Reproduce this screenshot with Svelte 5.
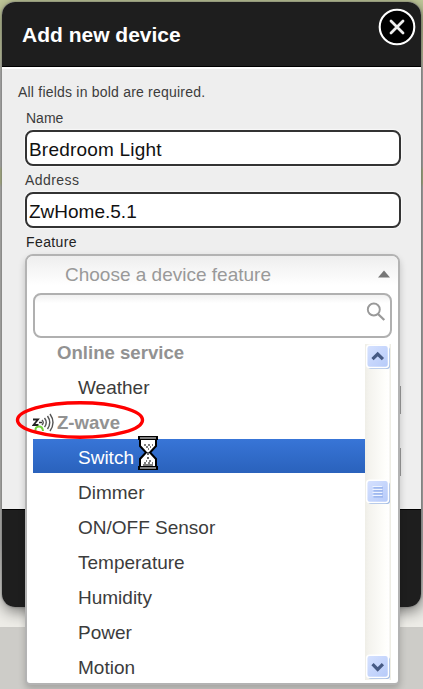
<script>
  const rows = [
    { text: 'Online service', group: true },
    { text: 'Weather' },
    { text: 'Z-wave', group: true, icon: true },
    { text: 'Switch', active: true },
    { text: 'Dimmer' },
    { text: 'ON/OFF Sensor' },
    { text: 'Temperature' },
    { text: 'Humidity' },
    { text: 'Power' },
    { text: 'Motion' }
  ];
</script>

<div class="page">
  <section class="dialog">
    <header>
      <h1>Add new device</h1>
      <svg class="close" width="38" height="38" viewBox="0 0 38 38">
        <circle cx="19" cy="19" r="17.3" fill="#000" stroke="#fff" stroke-width="2.1" />
        <path d="M13 13 L25 25 M25 13 L13 25" stroke="#eee" stroke-width="2.8" stroke-linecap="round" />
      </svg>
    </header>
    <div class="body">
      <p>All fields in bold are required.</p>
      <div class="label">Name</div>
      <div class="input first">Bredroom Light</div>
      <div class="label address">Address</div>
      <div class="input">ZwHome.5.1</div>
      <div class="label feature">Feature</div>
      <i class="edge one"></i>
      <i class="edge two"></i>
    </div>
    <footer></footer>
  </section>

  <div class="dropdown">
    <div class="choice">
      <span>Choose a device feature</span>
      <svg width="12" height="8" viewBox="0 0 12 8"><path d="M0 7.5 L6 0.5 L12 7.5 Z" fill="#777" /></svg>
    </div>
    <div class="search">
      <svg width="20" height="20" viewBox="0 0 20 20" fill="none" stroke="#999">
        <circle cx="7.8" cy="7.5" r="6" stroke-width="1.9" />
        <path d="M12 12 L18.3 18" stroke-width="2.3" />
      </svg>
    </div>
    <div class="results">
      <div class="list">
        {#each rows as row}
          <div class="row" class:group={row.group} class:active={row.active}>
            {#if row.icon}
              <svg class="wave" width="24" height="20" viewBox="0 0 24 20" fill="none">
                <path d="M1 6.5 H6 L1.5 12 H6.5" stroke="#222" stroke-width="1.8" />
                <path d="M7 9.5 H10" stroke="#333" stroke-width="1.5" />
                <path d="M10 7 Q12.5 9.5 10 12 M12.5 5 Q16 9.5 12.5 14 M15.5 3 Q20 9.5 15.5 16 M18 1 Q24 9.5 18 18" stroke="#555" stroke-width="1.4" />
                <path d="M3.5 18 Q3 13.5 7 13.5 Q10.5 13.5 11 18" stroke="#72d33c" stroke-width="2" />
              </svg>
            {/if}
            {row.text}
          </div>
        {/each}
      </div>
      <div class="scrollbar">
        <svg class="button" width="26" height="26" viewBox="0 0 26 26">
          <rect x="3" y="3" width="22" height="22" rx="3" fill="#a9c1e6" />
          <rect x="1.7" y="1.2" width="21.8" height="22.2" rx="3" fill="url(#blue)" stroke="#fff" stroke-width="1.5" />
          <path d="M7.5 15.2 L12.7 10 L17.9 15.2" fill="none" stroke="#465a84" stroke-width="3.2" />
          <defs>
            <linearGradient id="blue" x1="0" y1="0" x2="1" y2="1">
              <stop offset="0" stop-color="#d7e2ff" />
              <stop offset="1" stop-color="#b5caf9" />
            </linearGradient>
          </defs>
        </svg>
        <svg class="button" width="26" height="26" viewBox="0 0 26 26">
          <rect x="3" y="3" width="22" height="22" rx="3" fill="#a0bae2" />
          <rect x="1.7" y="1.2" width="21.8" height="22.2" rx="3" fill="url(#blue)" stroke="#fff" stroke-width="1.5" />
          <path d="M7.5 7.5 H17 M7.5 10.5 H17 M7.5 13.5 H17 M7.5 16.5 H17" stroke="#eff4ff" stroke-width="1.2" />
          <path d="M8.5 8.8 H18 M8.5 11.8 H18 M8.5 14.8 H18 M8.5 17.8 H18" stroke="#91aeea" stroke-width="1.2" />
        </svg>
        <svg class="button" width="26" height="26" viewBox="0 0 26 26">
          <rect x="3" y="3" width="22" height="22" rx="3" fill="#a0bae2" />
          <rect x="1.7" y="1.2" width="21.8" height="22.2" rx="3" fill="url(#blue)" stroke="#fff" stroke-width="1.5" />
          <path d="M7.5 10.2 L12.7 15.4 L17.9 10.2" fill="none" stroke="#465a84" stroke-width="3.2" />
        </svg>
      </div>
    </div>
  </div>

  <svg class="ring" width="132" height="42" viewBox="0 0 132 42">
    <ellipse cx="66" cy="21" rx="62.5" ry="17.3" fill="none" stroke="#f00" stroke-width="3.4" />
  </svg>
  <svg class="hourglass" width="22" height="36" viewBox="0 0 22 36">
    <path d="M3 4 H19 V11 L13 17.5 L19 24 V32 H3 V24 L9 17.5 L3 11 Z" fill="#fff" stroke="#000" stroke-width="2" />
    <rect x="1" y="1" width="20" height="4" fill="#000" />
    <path d="M3 3 H19" stroke="#fff" stroke-width="1" />
    <rect x="1" y="31" width="20" height="4" fill="#000" />
    <path d="M3 33 H19" stroke="#fff" stroke-width="1" />
    <path d="M7 10 h2 m2 0 h2 m2 0 h1 M9 12 h2 m2 0 h1 M11 14 h1 M11 17 v3 M11 22 v2 M9 26 h1 m2 0 h2 M7 28 h2 m2 0 h2 m2 0 h1 M6 30 h10" stroke="#000" stroke-width="1.2" />
  </svg>
</div>

<style>
  .page {
    position: relative;
    box-sizing: border-box;
    width: 423px;
    height: 689px;
    padding: 2px 2px 0;
    overflow: hidden;
    background: linear-gradient(#c3cb9c 0, #c3cb9c 20px, #d3d9ae 55px, #c9c9c7 72px, #c4c4c2 166px, #c3cb9c 170px, #c3cb9c 183px, #c6c6c4 187px, #c6c6c4 540px, #eeede8 600px, #eeede8 627px, #cdccc8 627px);
    font-family: "Liberation Sans", Arial, sans-serif;
    font-size: 19px;
    color: #3c3c3c;
  }
  .dialog {
    width: 419px;
    height: 605px;
    border-radius: 13px;
    background: #eee;
    box-shadow: 0 0 2px #666, 1px 4px 16px rgba(0, 0, 0, 0.55);
    overflow: hidden;
  }
  header {
    display: flex;
    justify-content: space-between;
    box-sizing: border-box;
    height: 65px;
    padding: 5px 5px 0 20px;
    background: #1e1e1e;
    border-bottom: 1px solid #000;
  }
  h1 {
    margin: 0;
    font-size: 21px;
    line-height: 56px;
    color: #fff;
  }
  .close { display: block; margin-top: 1px; }
  .body {
    position: relative;
    box-sizing: border-box;
    height: 442px;
    padding: 15px 20px 0 23px;
    border-top: 2px solid #fff;
  }
  p {
    margin: 0 0 0 -7px;
    font-size: 14px;
    line-height: 16px;
    letter-spacing: 0.21px;
  }
  .label {
    margin-top: 10px;
    padding-left: 1px;
    font-size: 14px;
    line-height: 16px;
  }
  .label.address { margin-top: 7px; padding-left: 0; letter-spacing: 0.45px; }
  .label.feature { margin-top: 7px; letter-spacing: 0.4px; color: #222; }
  .input {
    box-sizing: border-box;
    height: 36px;
    margin-top: 4px;
    margin-bottom: -1px;
    padding-left: 2px;
    border: 2px solid #333;
    border-radius: 8px;
    background: #fff;
    box-shadow: 0 0 1px 1px #f8f8f8;
    line-height: 35px;
    color: #111;
  }
  .first { letter-spacing: 0.2px; }
  .edge {
    position: absolute;
    left: 396px;
    width: 3px;
    height: 28px;
    background: #999;
  }
  .one { top: 317px; }
  .two { top: 379px; }
  footer {
    height: 98px;
    box-sizing: border-box;
    background: #1e1e1e;
    border-top: 1px solid #000;
  }
  .dropdown {
    position: absolute;
    left: 25px;
    top: 254px;
    box-sizing: border-box;
    width: 375px;
    height: 431px;
    border: 2px solid #b3b3b3;
    border-radius: 8px 8px 5px 5px;
    background: #fff;
    box-shadow: 0 4px 7px rgba(0, 0, 0, 0.2);
  }
  .choice {
    display: flex;
    align-items: center;
    justify-content: space-between;
    height: 37px;
    padding: 0 8px 0 38px;
    border-radius: 6px 6px 0 0;
    background: linear-gradient(#eee, #fff 80%);
    color: #999;
  }
  .choice svg { margin-bottom: 1px; }
  .search {
    display: flex;
    justify-content: flex-end;
    box-sizing: border-box;
    width: 359px;
    height: 45px;
    margin: 0 0 0 6px;
    padding: 7px 4px 0;
    border: 2px solid #b0b0b0;
    border-radius: 8px;
    background: linear-gradient(#f1f1f1, #fff 20%);
  }
  .results {
    display: flex;
    padding-left: 6px;
    height: 345px;
  }
  .list { width: 332px; margin-top: -4px; }
  .row {
    position: relative;
    height: 34px;
    margin-bottom: 1px;
    padding-left: 45px;
    line-height: 37px;
    white-space: nowrap;
  }
  .group {
    padding-left: 24px;
    font-size: 18.6px;
    font-weight: bold;
    color: #929292;
  }
  .active {
    background: linear-gradient(#3875d7, #2a62bc);
    color: #fff;
  }
  .wave { position: absolute; left: -1px; top: 9px; }
  .scrollbar {
    display: flex;
    flex-direction: column;
    justify-content: space-between;
    width: 26px;
    height: 336px;
    margin-top: 6px;
    box-sizing: border-box;
    background: linear-gradient(90deg, #efeee7 0, #f4f3ee 4px, #fefefb 20px, #fff 24px, #eeede5 25px);
  }
  .button { display: block; }
  .button:nth-child(2) { margin-top: 109px; margin-bottom: 149px; }
  .ring { position: absolute; left: 14px; top: 399px; }
  .hourglass { position: absolute; left: 137px; top: 435px; }
</style>
